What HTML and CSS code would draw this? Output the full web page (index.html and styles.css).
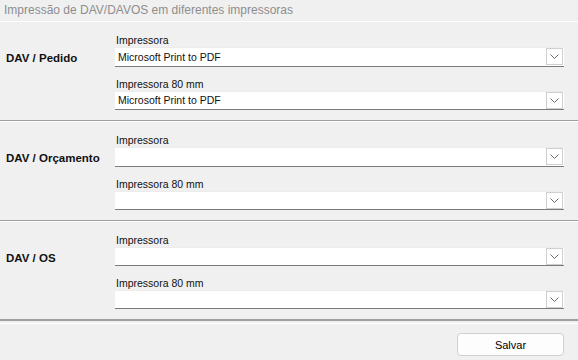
FILE: index.html
```html
<!DOCTYPE html>
<html lang="pt-BR">
<head>
    <meta charset="UTF-8">
    <title>Impressão de DAV/DAVOS</title>
    <link rel="stylesheet" href="styles.css">
</head>
<body>
    <div class="window">
        <div class="title">Impressão de DAV/DAVOS em diferentes impressoras</div>
        <div class="panel">
            <section class="group">
                <div class="group-name">DAV / Pedido</div>
                <div class="fields">
                    <label class="field-label">Impressora</label>
                    <div class="combo">
                        <span class="combo-text">Microsoft Print to PDF</span>
                        <span class="combo-btn"><svg width="9" height="5" viewBox="0 0 9 5"><path d="M0.5 0.5 L4.5 4.5 L8.5 0.5" fill="none" stroke="#6a6a6a" stroke-width="1"/></svg></span>
                    </div>
                    <label class="field-label">Impressora 80 mm</label>
                    <div class="combo">
                        <span class="combo-text">Microsoft Print to PDF</span>
                        <span class="combo-btn"><svg width="9" height="5" viewBox="0 0 9 5"><path d="M0.5 0.5 L4.5 4.5 L8.5 0.5" fill="none" stroke="#6a6a6a" stroke-width="1"/></svg></span>
                    </div>
                </div>
            </section>
            <section class="group">
                <div class="group-name">DAV / Orçamento</div>
                <div class="fields">
                    <label class="field-label">Impressora</label>
                    <div class="combo">
                        <span class="combo-text"></span>
                        <span class="combo-btn"><svg width="9" height="5" viewBox="0 0 9 5"><path d="M0.5 0.5 L4.5 4.5 L8.5 0.5" fill="none" stroke="#6a6a6a" stroke-width="1"/></svg></span>
                    </div>
                    <label class="field-label">Impressora 80 mm</label>
                    <div class="combo">
                        <span class="combo-text"></span>
                        <span class="combo-btn"><svg width="9" height="5" viewBox="0 0 9 5"><path d="M0.5 0.5 L4.5 4.5 L8.5 0.5" fill="none" stroke="#6a6a6a" stroke-width="1"/></svg></span>
                    </div>
                </div>
            </section>
            <section class="group">
                <div class="group-name">DAV / OS</div>
                <div class="fields">
                    <label class="field-label">Impressora</label>
                    <div class="combo">
                        <span class="combo-text"></span>
                        <span class="combo-btn"><svg width="9" height="5" viewBox="0 0 9 5"><path d="M0.5 0.5 L4.5 4.5 L8.5 0.5" fill="none" stroke="#6a6a6a" stroke-width="1"/></svg></span>
                    </div>
                    <label class="field-label">Impressora 80 mm</label>
                    <div class="combo">
                        <span class="combo-text"></span>
                        <span class="combo-btn"><svg width="9" height="5" viewBox="0 0 9 5"><path d="M0.5 0.5 L4.5 4.5 L8.5 0.5" fill="none" stroke="#6a6a6a" stroke-width="1"/></svg></span>
                    </div>
                </div>
            </section>
        </div>
        <div class="footer">
            <button class="btn">Salvar</button>
        </div>
    </div>
</body>
</html>
```

FILE: styles.css
```css
* {
    margin: 0;
    padding: 0;
    box-sizing: border-box;
}

body {
    background-color: #f0f0f0;
    font-family: "Liberation Sans", Arial, sans-serif;
    font-size: 10.5px;
    color: #000;
}

.window {
    width: 578px;
    height: 360px;
    display: flex;
    flex-direction: column;
}

.title {
    height: 21px;
    padding-left: 4px;
    line-height: 20px;
    font-size: 12px;
    color: #8e8e8e;
}

.panel {
    border-top: 1px solid #fff;
}

.group {
    display: flex;
    height: 99px;
    padding-top: 11px;
    border-bottom: 1px solid #a0a0a0;
    box-shadow: 0 1px 0 #fff;
    margin-bottom: 1px;
}

.group:last-child {
    border-bottom: 2px solid #a0a0a0;
    box-shadow: 0 2px 0 #f0f0f0, 0 3px 0 #fff;
    margin-bottom: 3px;
}

.group-name {
    width: 115px;
    padding-left: 6px;
    padding-top: 18px;
    line-height: 14px;
    font-weight: bold;
    font-size: 11.5px;
    color: #111;
}

.fields {
    width: 449px;
    display: flex;
    flex-direction: column;
}

.field-label {
    display: block;
    height: 14px;
    line-height: 14px;
    padding-left: 1px;
    color: #111;
}

.combo {
    height: 20px;
    margin-bottom: 10px;
    background-color: #fff;
    border-top: 1px solid #ececec;
    border-bottom: 1px solid #7a7a7a;
    display: flex;
    align-items: center;
    justify-content: space-between;
}

.combo-text {
    padding-left: 3px;
    color: #111;
}

.combo-btn {
    width: 17px;
    height: 17px;
    margin-right: 1px;
    border: 1px solid #cfcfcf;
    display: flex;
    align-items: center;
    justify-content: center;
}

.footer {
    flex-grow: 1;
    display: flex;
    justify-content: flex-end;
    align-items: flex-start;
    padding: 9px 14px 0 0;
}

.btn {
    width: 107px;
    height: 23px;
    background-color: #fdfdfd;
    border: 1px solid #d0d0d0;
    border-radius: 4px;
    font-family: "Liberation Sans", Arial, sans-serif;
    font-size: 11px;
    color: #000;
}
```
